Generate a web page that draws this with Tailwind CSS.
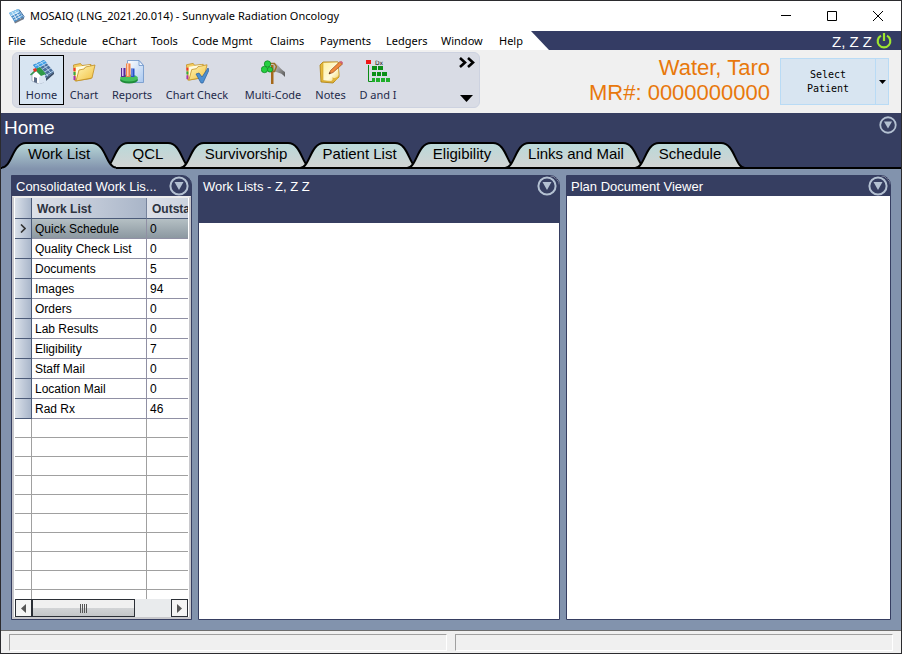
<!DOCTYPE html>
<html lang="en">
<head>
<meta charset="utf-8">
<title>MOSAIQ</title>
<script src="https://cdn.jsdelivr.net/npm/@tailwindcss/browser@4"></script>
</head>
<body>
<svg class="absolute size-0" aria-hidden="true">
  <defs>
    <linearGradient id="tabOn" x1="0" y1="0" x2="0" y2="1"><stop offset="0" stop-color="#b8d8d8"/><stop offset="1" stop-color="#8293ad"/></linearGradient>
    <linearGradient id="tabOff" x1="0" y1="0" x2="0" y2="1"><stop offset="0" stop-color="#b9d9d9"/><stop offset="1" stop-color="#d3d3d3"/></linearGradient>
    <linearGradient id="folder" x1="0" y1="0" x2="1" y2="1"><stop offset="0" stop-color="#fff6b8"/><stop offset="1" stop-color="#f2c040"/></linearGradient>
    <linearGradient id="note" x1="0" y1="0" x2="1" y2="1"><stop offset="0" stop-color="#fff0a0"/><stop offset=".6" stop-color="#fffbdc"/><stop offset="1" stop-color="#f0cc58"/></linearGradient>
    <linearGradient id="doc" x1="0" y1="0" x2="1" y2="1"><stop offset="0" stop-color="#ffffff"/><stop offset="1" stop-color="#a9c8f0"/></linearGradient>
    <linearGradient id="axe" x1="0" y1="0" x2="1" y2="1"><stop offset="0" stop-color="#d0d0d0"/><stop offset="1" stop-color="#555555"/></linearGradient>
    <symbol id="dropcircle" viewBox="0 0 20 20"><circle cx="10" cy="10" r="8.6" fill="none" stroke="#b4c1d2" stroke-width="2"/><path d="M5.500 6h9L10 14z" fill="#b4c1d2"/></symbol>
    <symbol id="foldericon" viewBox="0 0 24 24">
      <path d="M1.500 5l7-1.500 1.500 2 9-1v14L3 21z" fill="#f3cd62" stroke="#c08e22" stroke-width=".8"/>
      <path d="M4 7l14-2v5L7 12 4 20z" fill="#fffbe0"/>
      <path d="M7 10l5-1 1.500-2 9.500-2-3 13-16 3z" fill="url(#folder)" stroke="#c08e22" stroke-width=".8"/>
      <path d="M2.500 8v3" stroke="#e33" stroke-width="2"/><path d="M2.500 12v3" stroke="#3a4" stroke-width="2"/><path d="M2.500 16v4" stroke="#a3a" stroke-width="2"/>
    </symbol>
  </defs>
</svg>
<div class="flex h-screen flex-col overflow-hidden border border-[#2b2b2e] bg-[#f0f0f0] font-['Noto_Sans',sans-serif] text-xs text-black">

  <header class="flex h-[30px] shrink-0 items-center bg-white pl-2">
    <svg class="mr-1 size-4" viewBox="0 0 16 16">
      <path d="M5 13.500l9-5v3l-8 4z" fill="#777d88"/>
      <path d="M0 5l9-4 5.500 8-9 5z" fill="#4a8fcb"/>
      <path d="M0 5l9-4 2 3-9 4z" fill="#8cc8ee"/>
      <path d="M2 7.800l8-4M3.500 10l8-4.300M5 12l8-4.500M3 4l5 8M6 3l5.500 7.500" stroke="#fff" stroke-width=".7"/>
      <path d="M10 1.500l5 7-1 3" fill="none" stroke="#38689c"/>
    </svg>
    <h1 class="ml-px flex-1 whitespace-nowrap text-[11px]">MOSAIQ (LNG_2021.20.014) - Sunnyvale Radiation Oncology</h1>
    <button aria-label="Minimize" class="flex h-full w-[46px] items-center justify-center"><svg class="size-[10px]" viewBox="0 0 10 10"><path d="M0 4.500h10" stroke="#000"/></svg></button>
    <button aria-label="Maximize" class="flex h-full w-[46px] items-center justify-center"><svg class="size-[10px]" viewBox="0 0 10 10"><path d="M.5.5h9v9h-9z" fill="none" stroke="#000"/></svg></button>
    <button aria-label="Close" class="flex h-full w-[46px] items-center justify-center"><svg class="size-[10px]" viewBox="0 0 10 10"><path d="M0 0l10 10M10 0L0 10" stroke="#000"/></svg></button>
  </header>

  <div class="flex h-[19px] shrink-0 bg-white">
    <nav class="grid w-[530px] grid-cols-[32px_62px_49px_41px_78px_50px_66px_55px_58px_39px] items-center whitespace-nowrap pt-[2px] pl-[7px] text-[11px]">
      <a href="#">File</a><a href="#">Schedule</a><a href="#">eChart</a><a href="#">Tools</a><a href="#">Code Mgmt</a><a href="#">Claims</a><a href="#">Payments</a><a href="#">Ledgers</a><a href="#">Window</a><a href="#">Help</a>
    </nav>
    <div class="flex flex-1 items-center justify-end gap-1 bg-[#343c64] pr-[9px] font-['Liberation_Sans',sans-serif] text-[15px] text-white [clip-path:polygon(0_0,100%_0,100%_100%,18px_100%)]">
      <span class="pt-[2px]">Z, Z Z</span>
      <button aria-label="Log off"><svg class="size-4" viewBox="0 0 16 16"><path d="M5 2.600a6.300 6.300 0 1 0 6 0M8 0v8" fill="none" stroke="#9fe62f" stroke-width="2.200"/></svg></button>
    </div>
  </div>

  <section class="flex h-[63px] shrink-0 items-start pr-3 pl-[11px]">
    <div class="mt-[2px] flex h-14 w-[468px] rounded-md border border-[#cdd2e0] bg-[#d9dce5] p-[2px] pl-[6px] text-[11px] text-[#1e2a4a]">
      <button class="flex w-[45px] flex-col items-center gap-1 border border-black bg-[#d8e5f2] pt-1">
        <svg class="size-6 shrink-0" viewBox="0 0 24 24">
          <path d="M3 5L14 0l10 12-8 6z" fill="#4a6f9c"/><path d="M3 5L14 0l3 3-11 6z" fill="#3fa0e6"/>
          <path d="M5 6l10-5M8 8l9-5M11 10l8-5M13 13l8-5M15 16l8-5M6 3l12 13M10 1l11 12" stroke="#c9e2f8" stroke-width=".8"/>
          <path d="M16 18l8-6v2l-8 7z" fill="#3b4d66"/>
          <path d="M2 15l5-5 7 6v6l-5 2-7-3z" fill="#fff" stroke="#8d9bb0" stroke-width=".7"/>
          <path d="M9 17l6-3v8l-6 2z" fill="#dbe6f3"/>
          <path d="M0 14.500L6 9l4-2 6 7-5 2-5-5-5 4.500z" fill="#2f9a49"/><path d="M3 9l3-1 1 3-3 1z" fill="#e53222"/><path d="M4 17l3 1v5l-3-1z" fill="#5b6b86"/>
        </svg>
        <span>Home</span>
      </button>
      <button class="flex w-10 flex-col items-center gap-1 pt-[5px]">
        <svg class="size-6 shrink-0"><use href="#foldericon"/></svg><span>Chart</span>
      </button>
      <button class="flex w-14 flex-col items-center gap-1 pt-[5px]">
        <svg class="size-6 shrink-0" viewBox="0 0 24 24">
          <path d="M7.500 .5h11.500l4.500 5v17h-16z" fill="url(#doc)" stroke="#6d94c9" stroke-width=".8"/><path d="M19 .5v5h4.500z" fill="#eaf3ff" stroke="#6d94c9" stroke-width=".8"/>
          <ellipse cx="9" cy="20" rx="9" ry="3.500" fill="#1f8c3a"/><ellipse cx="9" cy="18" rx="9" ry="3.500" fill="#45c05f"/>
          <path d="M1 8h4.500v9H1z" fill="#5a2a9a"/><path d="M2 8h1.500v8H2z" fill="#d9c2f5"/><path d="M6 3.500h4.500V17H6z" fill="#f0854c"/><path d="M7 3.500h1.500V16H7z" fill="#ffd0b0"/><path d="M11 8.500h3.500V17H11z" fill="#2750c8"/><path d="M11.500 8.500h1V16h-1z" fill="#9ab4f5"/>
        </svg>
        <span>Reports</span>
      </button>
      <button class="flex w-[74px] flex-col items-center gap-1 pt-[5px] whitespace-nowrap">
        <svg class="size-6 shrink-0" viewBox="0 0 24 24"><use href="#foldericon" width="23" height="23"/><path d="M11 14l3-1 3 4 6-9 1 2-6 13h-2z" fill="#4d8fd0" stroke="#2b5e9b" stroke-width=".7"/></svg>
        <span>Chart Check</span>
      </button>
      <button class="flex w-[78px] flex-col items-center gap-1 pt-[5px]">
        <svg class="size-6 shrink-0" viewBox="0 0 24 24">
          <path d="M12 3c5 0 6 5 12 9v5c-3-4-6-4-12-6z" fill="url(#axe)"/><path d="M10 5h2.500v19H10z" fill="#a5681a"/><path d="M9 3.500h4.500l2 3-2 5h-3" fill="none" stroke="#987023" stroke-width="1.400"/>
          <g fill="#25d040" stroke="#0f8a25" stroke-width=".8"><circle cx="6.500" cy="4" r="3.200"/><circle cx="3.500" cy="9.500" r="3.200"/><circle cx="9" cy="9.500" r="2.600"/></g>
        </svg>
        <span>Multi-Code</span>
      </button>
      <button class="flex w-[37px] flex-col items-center gap-1 pt-[5px]">
        <svg class="size-6 shrink-0" viewBox="0 0 24 24">
          <path d="M1 5l3-3h15l1 15-6 6-12-1z" fill="#e6b93a" stroke="#a87c12" stroke-width=".8"/><path d="M4 2.500l15-.5 1 13c-1 4-4 6-8 6.500l-8-1z" fill="url(#note)" stroke="#c99b25" stroke-width=".6"/><path d="M12 21.500c2-2 2-3 1-4 3 1 5 0 7-2-1 4-4 6-8 6z" fill="#e0b23a"/>
          <path d="M10 14l1.500-3.500L20.500 2l3 2-9.500 8.500z" fill="#f08a3c" stroke="#9a4b1c" stroke-width=".7"/><path d="M20.500 2L22 .8l2 1.800-.5 1.400z" fill="#d0607a"/><path d="M10 14l.6-1.800 1.200.9z" fill="#222"/>
        </svg>
        <span>Notes</span>
      </button>
      <button class="flex w-[58px] flex-col items-center gap-1 pt-[5px]">
        <svg class="size-6 shrink-0" viewBox="0 0 24 24">
          <path d="M0 0h5v4H0z" fill="#f01818"/><path d="M2.500 5v16.500H6" fill="none" stroke="#0a8c14"/>
          <text x="9" y="5" font-family="DejaVu Sans" font-size="6" fill="#111">Dx</text>
          <path d="M6 6h5v4H6zM12 6h5v4h-5zM6 12h4v4H6zM11 12h4v4h-4zM16 12h5v4h-5z" fill="#0b8f17"/><path d="M6 18h3v4H6zM10 18h4v4h-4zM15 18h4v4h-4zM20 18h4v4h-4z" fill="#1fae2a"/>
        </svg>
        <span>D and I</span>
      </button>
      <div class="ml-auto flex w-[18px] flex-col items-start justify-between py-[2px] text-black">
        <button aria-label="More tools"><svg class="h-[11px] w-4" viewBox="0 0 16 11"><path d="M1 1l5 4.500L1 10M9 1l5 4.500L9 10" fill="none" stroke="#000" stroke-width="2.600"/></svg></button>
        <button aria-label="Toolbar options"><svg class="ml-px h-[9px] w-[13px]" viewBox="0 0 13 9"><path d="M0 1h13L6.500 8z"/></svg></button>
      </div>
    </div>
    <div class="ml-auto pt-[5px] pr-[10px] text-right font-['Liberation_Sans',sans-serif] text-[22px] leading-[25px] whitespace-nowrap text-[#e8780c]">
      <p>Water, Taro</p><p>MR#: 0000000000</p>
    </div>
    <div class="mt-2 flex h-[47px] w-[109px] border border-[#b9dbf5] bg-[#d8e5f1]">
      <button class="flex-1 font-['DejaVu_Sans_Mono',monospace] text-[10px] leading-[14px]">Select<br>Patient</button>
      <button aria-label="Recent patients" class="flex w-[13px] items-center justify-center border-l border-[#b9dbf5]"><svg class="h-1 w-[7px]" viewBox="0 0 7 4"><path d="M0 0h7L3.500 4z"/></svg></button>
    </div>
  </section>

  <section class="flex h-[56px] shrink-0 flex-col border-b-2 border-black bg-[#363e61] font-['Liberation_Sans',sans-serif]">
    <div class="flex h-[29px] shrink-0 items-center justify-between pr-1 pl-[3px]">
      <h2 class="text-[19px] text-white">Home</h2>
      <button aria-label="Page menu" class="-mt-[6px]"><svg class="size-[18px]"><use href="#dropcircle"/></svg></button>
    </div>
    <div role="tablist" class="-mb-[2px] flex pl-px text-[15px]">
      <button role="tab" aria-selected="true" class="relative z-10 grid h-[27px] w-[114px]">
        <svg class="col-start-1 row-start-1" width="114" height="27" viewBox="0 0 114 27"><path d="M0 27v-1.500C10 25 10 1 24 1h66c14 0 14 24.500 24 24.500V27z" fill="url(#tabOn)"/><path d="M0 25.500C10 25.500 10 1 24 1h66c14 0 14 24.500 24 24.500" fill="none" stroke="#000" stroke-width="2"/></svg>
        <span class="col-start-1 row-start-1 pt-[2px]">Work List</span></button>
      <button role="tab" class="relative -ml-3 grid h-[27px] w-[88px]">
        <svg class="col-start-1 row-start-1" width="88" height="27" viewBox="0 0 88 27"><path d="M0 26C10 26 10 1 24 1h40c14 0 14 25 24 25z" fill="url(#tabOff)" stroke="#000" stroke-width="2"/></svg>
        <span class="col-start-1 row-start-1 pt-[2px]">QCL</span></button>
      <button role="tab" class="relative -ml-3 grid h-[27px] w-[132px]">
        <svg class="col-start-1 row-start-1" width="132" height="27" viewBox="0 0 132 27"><path d="M0 26C10 26 10 1 24 1h84c14 0 14 25 24 25z" fill="url(#tabOff)" stroke="#000" stroke-width="2"/></svg>
        <span class="col-start-1 row-start-1 pt-[2px]">Survivorship</span></button>
      <button role="tab" class="relative -ml-3 grid h-[27px] w-[119px]">
        <svg class="col-start-1 row-start-1" width="119" height="27" viewBox="0 0 119 27"><path d="M0 26C10 26 10 1 24 1h71c14 0 14 25 24 25z" fill="url(#tabOff)" stroke="#000" stroke-width="2"/></svg>
        <span class="col-start-1 row-start-1 pt-[2px]">Patient List</span></button>
      <button role="tab" class="relative -ml-3 grid h-[27px] w-[110px]">
        <svg class="col-start-1 row-start-1" width="110" height="27" viewBox="0 0 110 27"><path d="M0 26C10 26 10 1 24 1h62c14 0 14 25 24 25z" fill="url(#tabOff)" stroke="#000" stroke-width="2"/></svg>
        <span class="col-start-1 row-start-1 pt-[2px]">Eligibility</span></button>
      <button role="tab" class="relative -ml-3 grid h-[27px] w-[142px]">
        <svg class="col-start-1 row-start-1" width="142" height="27" viewBox="0 0 142 27"><path d="M0 26C10 26 10 1 24 1h94c14 0 14 25 24 25z" fill="url(#tabOff)" stroke="#000" stroke-width="2"/></svg>
        <span class="col-start-1 row-start-1 pt-[2px]">Links and Mail</span></button>
      <button role="tab" class="relative -ml-3 grid h-[27px] w-[110px]">
        <svg class="col-start-1 row-start-1" width="110" height="27" viewBox="0 0 110 27"><path d="M0 26C10 26 10 1 24 1h62c14 0 14 25 24 25z" fill="url(#tabOff)" stroke="#000" stroke-width="2"/></svg>
        <span class="col-start-1 row-start-1 pt-[2px]">Schedule</span></button>
    </div>
  </section>

  <main class="grid min-h-0 flex-1 grid-cols-[181px_362fr_325fr] gap-[6px] bg-[#8293ad] px-[10px] pt-[6px] pb-[10px] font-['Liberation_Sans',sans-serif]">
    <section class="flex min-h-0 flex-col overflow-hidden rounded-tr-[10px] border border-[#363e61] bg-[#363e61]">
      <div class="flex h-5 shrink-0 items-center justify-between pr-[2px] pl-1 text-[13px] text-white">
        <h3 class="pt-px whitespace-nowrap">Consolidated Work Lis...</h3>
        <button aria-label="Work list menu"><svg class="size-5"><use href="#dropcircle"/></svg></button>
      </div>
      <div class="flex min-h-0 flex-1 flex-col border-2 border-[#c8c8cc] border-t-[#ececec] bg-white px-px">
        <div class="flex min-h-0 flex-1 flex-col overflow-hidden">
          <table class="w-full shrink-0 table-fixed border-separate border-spacing-0 text-left whitespace-nowrap">
            <colgroup><col class="w-[17px]"><col class="w-[115px]"><col></colgroup>
            <thead><tr class="h-[21px] text-[#2d3340]">
              <th class="border-r border-b border-[#4b5a78] bg-linear-to-r from-[#dbe1ea] to-[#a9b6ca] p-0"></th>
              <th class="border-r border-b border-r-[#76839c] border-b-[#4b5a78] bg-linear-to-r from-[#dde1e9] to-[#a9b5c8] p-0 pt-px pl-[5px]">Work List</th>
              <th class="overflow-hidden border-b border-[#4b5a78] bg-linear-to-r from-[#dde1e9] to-[#ccd3de] p-0 pt-px pl-[5px]">Outsta</th>
            </tr></thead>
            <tbody id="rows"></tbody>
          </table>
          <div id="blank" class="min-h-0 flex-1 overflow-hidden"></div>
        </div>
        <div class="flex h-[18px] shrink-0 bg-[#e9ebed]">
          <button aria-label="Scroll left" class="flex w-[17px] items-center justify-center border border-[#2b2f36] bg-[#f4f4f4]"><svg class="h-[9px] w-[5px]" viewBox="0 0 5 9"><path d="M5 0v9L0 4.500z" fill="#555"/></svg></button>
          <div class="flex w-[103px] items-center justify-center gap-px border border-[#2b2f36] bg-linear-to-b from-[#f0f0f0] from-50% via-[#d2d4d6] via-50% to-[#c4c6c8]">
            <i class="h-[9px] w-px bg-[#555]"></i><i class="h-[9px] w-px bg-[#555]"></i><i class="h-[9px] w-px bg-[#555]"></i><i class="h-[9px] w-px bg-[#555]"></i>
          </div>
          <button aria-label="Scroll right" class="ml-auto flex w-[17px] items-center justify-center border border-[#2b2f36] bg-[#f4f4f4]"><svg class="h-[9px] w-[5px]" viewBox="0 0 5 9"><path d="M0 0v9l5-4.500z" fill="#555"/></svg></button>
        </div>
      </div>
    </section>

    <section class="flex min-h-0 flex-col overflow-hidden rounded-tr-[10px] border border-[#363e61] bg-white">
      <div class="flex h-[47px] shrink-0 items-start justify-between bg-[#363e61] pr-[2px] pl-1 text-[13px] leading-5 text-white">
        <h3 class="pt-px">Work Lists - Z, Z Z</h3>
        <button aria-label="Work lists menu"><svg class="size-5"><use href="#dropcircle"/></svg></button>
      </div>
    </section>

    <section class="flex min-h-0 flex-col overflow-hidden rounded-tr-[10px] border border-[#363e61] bg-white">
      <div class="flex h-5 shrink-0 items-center justify-between bg-[#363e61] pr-[2px] pl-1 text-[13px] text-white">
        <h3 class="pt-px">Plan Document Viewer</h3>
        <button aria-label="Viewer menu"><svg class="size-5"><use href="#dropcircle"/></svg></button>
      </div>
    </section>
  </main>

  <footer class="flex h-[23px] shrink-0 gap-2 border-t border-[#6e6e6e] px-2 pt-[3px] pb-[2px]">
    <div class="flex-1 border border-t-[#a0a0a0] border-r-white border-b-white border-l-[#a0a0a0]"></div>
    <div class="flex-1 border border-t-[#a0a0a0] border-r-white border-b-white border-l-[#a0a0a0]"></div>
  </footer>
</div>
<script>
const items = [["Quick Schedule",0],["Quality Check List",0],["Documents",5],["Images",94],["Orders",0],["Lab Results",0],["Eligibility",7],["Staff Mail",0],["Location Mail",0],["Rad Rx",46]];
document.getElementById("rows").innerHTML = items.map(([name, n], i) => `
  <tr class="h-5 ${i ? "" : "bg-linear-to-b from-[#b5c0c4] to-[#8a969f]"}">
    <td class="border-r border-b border-[#4b5a78] bg-linear-to-r from-[#dbe1ea] to-[#a9b6ca] p-0">${i ? "" : '<svg class="mx-auto h-[9px] w-[6px]" viewBox="0 0 6 9"><path d="M1 .5l4 4-4 4" fill="none" stroke="#333" stroke-width="1.600"/></svg>'}</td>
    <td class="border-r border-b border-[#9090a4] p-0 pl-[3px]">${name}</td>
    <td class="border-b border-[#9090a4] p-0 pl-[3px]">${n}</td>
  </tr>`).join("");
document.getElementById("blank").innerHTML = Array.from({length: 40}, () => `
  <div class="flex h-[19px] border-b border-[#a0a0a0]"><div class="w-[17px] border-r border-[#a0a0a0]"></div><div class="w-[115px] border-r border-[#a0a0a0]"></div></div>`).join("");
</script>
</body>
</html>
